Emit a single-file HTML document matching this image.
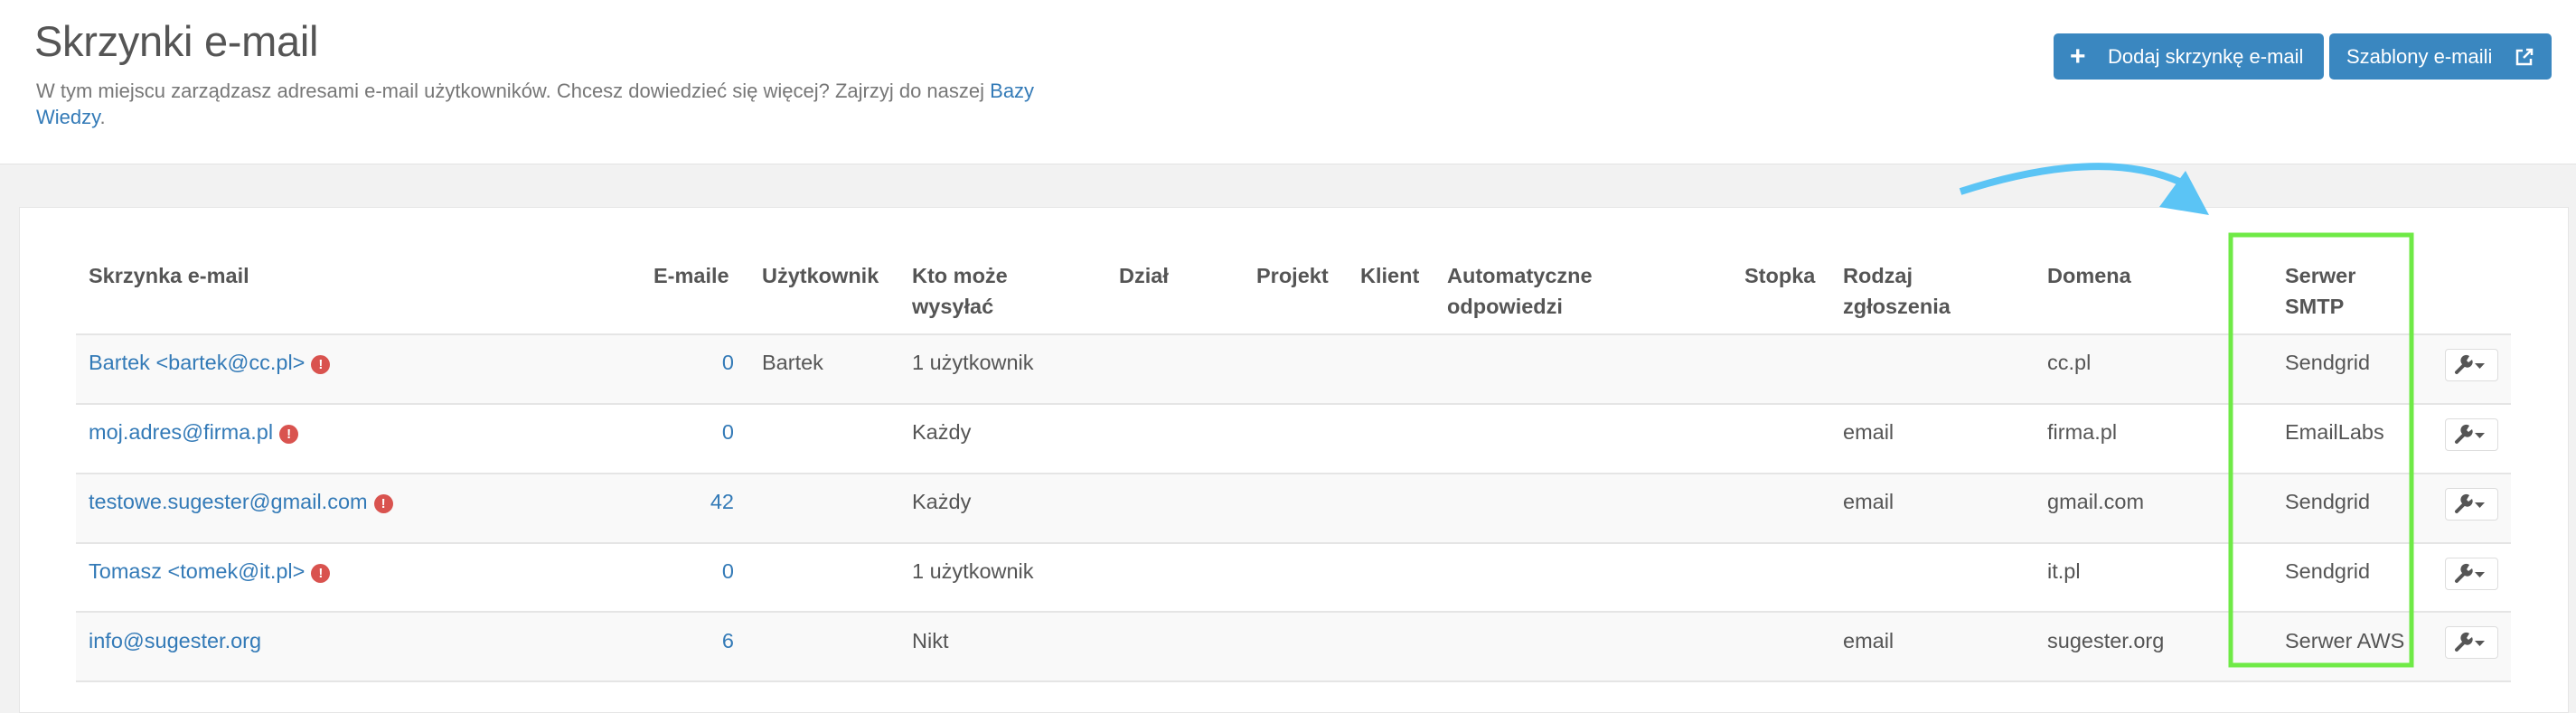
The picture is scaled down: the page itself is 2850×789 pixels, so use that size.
<!DOCTYPE html>
<html><head><meta charset="utf-8"><style>
*{margin:0;padding:0;box-sizing:border-box}
body{width:2850px;height:766px;overflow:hidden;background:#f2f2f2;font-family:"Liberation Sans",sans-serif;color:#555;position:relative}
.top{position:absolute;left:0;top:0;width:2850px;height:182px;background:#fff;border-bottom:1px solid #e4e4e4}
h1{position:absolute;left:38px;top:18px;font-size:47px;font-weight:normal;color:#555;letter-spacing:-0.3px}
.sub{position:absolute;left:40px;top:86px;font-size:22px;line-height:29px;width:1180px;color:#777}
a{color:#337ab7;text-decoration:none}
.btn{position:absolute;top:37px;height:51px;background:#3a87c0;color:#fff;border-radius:5px;font-size:22px;line-height:51px}
.card{position:absolute;left:21px;top:229px;width:2821px;height:560px;background:#fff;border:1px solid #e6e6e6}
.a{position:absolute;font-size:23.5px;white-space:nowrap}
.n{position:absolute;font-size:23.5px;right:2038px;text-align:right}
.h{position:absolute;font-size:23.5px;font-weight:bold;color:#555;line-height:34px;top:288px}
.row{position:absolute;left:84px;width:2694px;border-top:2px solid #e5e5e5}
.err{display:inline-block;width:21px;height:21px;border-radius:50%;background:#d9534f;color:#fff;font-size:15px;font-weight:bold;text-align:center;line-height:21px;vertical-align:1px;margin-left:7px}
.w{position:absolute;left:2705px;width:59px;height:36px;border:1px solid #ddd;border-radius:4px;background:#fff}
</style></head><body>
<div class="top"></div>
<h1>Skrzynki e-mail</h1>
<div class="sub">W tym miejscu zarządzasz adresami e-mail użytkowników. Chcesz dowiedzieć się więcej? Zajrzyj do naszej <a>Bazy Wiedzy</a>.</div>
<div class="btn" style="left:2272px;width:299px"><span style="position:absolute;left:18px;font-weight:bold;font-size:30px">+</span><span style="position:absolute;left:60px">Dodaj skrzynkę e-mail</span></div>
<div class="btn" style="left:2577px;width:246px"><span style="position:absolute;left:19px">Szablony e-maili</span>
<svg style="position:absolute;left:205px;top:15px" width="22" height="22" viewBox="0 0 22 22" fill="none" stroke="#fff" stroke-width="2.5"><path d="M9 4H3v15h15v-6"/><path d="M10 12L19 3M13 3h6v6"/></svg></div>
<div class="card"></div>
<svg style="position:absolute;left:0;top:0" width="2850" height="766">
<path d="M2169 212 Q2330 160 2420 205" fill="none" stroke="#5bc4f5" stroke-width="8"/>
<polygon points="2389,229 2418,189 2444,238" fill="#5bc4f5"/>
</svg>
<div class="h" style="left:98px">Skrzynka e-mail</div>
<div class="h" style="left:723px">E-maile</div>
<div class="h" style="left:843px">Użytkownik</div>
<div class="h" style="left:1009px">Kto może<br>wysyłać</div>
<div class="h" style="left:1238px">Dział</div>
<div class="h" style="left:1390px">Projekt</div>
<div class="h" style="left:1505px">Klient</div>
<div class="h" style="left:1601px">Automatyczne<br>odpowiedzi</div>
<div class="h" style="left:1930px">Stopka</div>
<div class="h" style="left:2039px">Rodzaj<br>zgłoszenia</div>
<div class="h" style="left:2265px">Domena</div>
<div class="h" style="left:2528px">Serwer<br>SMTP</div>

<div class="row" style="top:369px;height:79px;background:#f9f9f9"></div>
<div class="row" style="top:446px;height:77px;background:#fff"></div>
<div class="row" style="top:523px;height:78px;background:#f9f9f9"></div>
<div class="row" style="top:600px;height:77px;background:#fff"></div>
<div class="row" style="top:676px;height:78px;background:#f9f9f9"></div>
<div class="row" style="top:753px;height:13px;background:#fff"></div>

<div class="a" style="left:98px;top:388px"><a>Bartek &lt;bartek@cc.pl&gt;</a><span class="err">!</span></div>
<div class="n" style="top:388px"><a>0</a></div>
<div class="a" style="left:843px;top:388px">Bartek</div>
<div class="a" style="left:1009px;top:388px">1 użytkownik</div>
<div class="a" style="left:2265px;top:388px">cc.pl</div>
<div class="a" style="left:2528px;top:388px">Sendgrid</div>

<div class="a" style="left:98px;top:465px"><a>moj.adres@firma.pl</a><span class="err">!</span></div>
<div class="n" style="top:465px"><a>0</a></div>
<div class="a" style="left:1009px;top:465px">Każdy</div>
<div class="a" style="left:2039px;top:465px">email</div>
<div class="a" style="left:2265px;top:465px">firma.pl</div>
<div class="a" style="left:2528px;top:465px">EmailLabs</div>

<div class="a" style="left:98px;top:542px"><a>testowe.sugester@gmail.com</a><span class="err">!</span></div>
<div class="n" style="top:542px"><a>42</a></div>
<div class="a" style="left:1009px;top:542px">Każdy</div>
<div class="a" style="left:2039px;top:542px">email</div>
<div class="a" style="left:2265px;top:542px">gmail.com</div>
<div class="a" style="left:2528px;top:542px">Sendgrid</div>

<div class="a" style="left:98px;top:619px"><a>Tomasz &lt;tomek@it.pl&gt;</a><span class="err">!</span></div>
<div class="n" style="top:619px"><a>0</a></div>
<div class="a" style="left:1009px;top:619px">1 użytkownik</div>
<div class="a" style="left:2265px;top:619px">it.pl</div>
<div class="a" style="left:2528px;top:619px">Sendgrid</div>

<div class="a" style="left:98px;top:696px"><a>info@sugester.org</a></div>
<div class="n" style="top:696px"><a>6</a></div>
<div class="a" style="left:1009px;top:696px">Nikt</div>
<div class="a" style="left:2039px;top:696px">email</div>
<div class="a" style="left:2265px;top:696px">sugester.org</div>
<div class="a" style="left:2528px;top:696px">Serwer AWS</div>

<div class="w" style="top:386px"></div>
<div class="w" style="top:463px"></div>
<div class="w" style="top:540px"></div>
<div class="w" style="top:617px"></div>
<div class="w" style="top:693px"></div>
<svg style="position:absolute;left:0;top:0" width="2850" height="766">
<defs><g id="wr"><path d="M2 20 L11 11" stroke="#555" stroke-width="4" stroke-linecap="round"/><path d="M9 12 A6 6 0 0 1 16 2 L13 7 L15 9 L19 6 A6 6 0 0 1 11 14Z" fill="#555"/><polygon points="22,10 33,10 27.5,16" fill="#555"/></g></defs>
<use href="#wr" x="2716" y="392"/>
<use href="#wr" x="2716" y="469"/>
<use href="#wr" x="2716" y="546"/>
<use href="#wr" x="2716" y="623"/>
<use href="#wr" x="2716" y="699"/>
<rect x="2468" y="260" width="200" height="476" fill="none" stroke="#6fea46" stroke-width="5"/>
</svg>
</body></html>
